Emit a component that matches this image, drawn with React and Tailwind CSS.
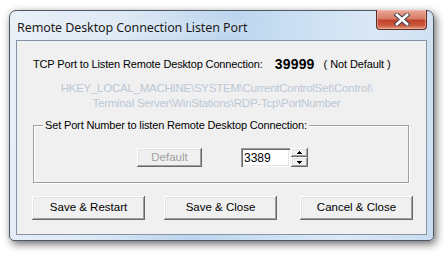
import React from "react";

const btn =
  "bg-[#f0f0f0] shadow-[inset_-1px_-1px_0_#696969,inset_1px_1px_0_#ffffff,inset_-2px_-2px_0_#a0a0a0,inset_2px_2px_0_#e3e3e3] flex items-center justify-center text-[11.5px] text-[#000]";

export default function App() {
  return (
    <div className="w-[445px] h-[257px] bg-white pl-[9px] pt-[10px] font-['Liberation_Sans',sans-serif]">
      <div className="relative w-[425px] h-[231px] rounded-t-[7px] rounded-b-[5px] border border-[#4d5865] shadow-[2px_3px_9px_rgba(0,0,0,0.6)] bg-[linear-gradient(100deg,#e9f0f8_0%,#dde9f5_25%,#bcd5ee_48%,#cadff3_62%,#dbe8f5_80%,#c9dcf0_100%)] flex flex-col">
        {/* title bar */}
        <div className="h-[29px] flex items-start pl-[7px] pr-[6px] shrink-0">
          <div className="mt-[9px] text-[12.5px] text-[#1a1a1a] font-['Noto_Sans',sans-serif] tracking-[-0.1px] leading-[16px] [text-shadow:0_0_8px_rgba(255,255,255,0.9)]">
            Remote Desktop Connection Listen Port
          </div>
          <div className="ml-auto w-[51px] h-[20px] -mt-px rounded-b-[4px] border border-t-0 border-[#5a2a24] bg-[linear-gradient(180deg,#e8a796_0%,#d87c66_45%,#c2432a_55%,#c9573c_80%,#e09a7c_100%)] shadow-[inset_0_0_0_1px_rgba(255,200,190,0.5)] flex items-center justify-center">
            <svg width="16" height="13" viewBox="0 0 16 13">
              <path d="M3 2 L13 11 M13 2 L3 11" stroke="#3a3a4a" strokeWidth="4.6" strokeLinecap="square" />
              <path d="M3 2 L13 11 M13 2 L3 11" stroke="#ffffff" strokeWidth="2.8" strokeLinecap="square" />
            </svg>
          </div>
        </div>
        {/* client */}
        <div className="mx-[6px] mb-[5px] flex-1 border border-[#8593a4] bg-[#f0f0f0] flex flex-col text-[11px] text-black">
          <div className="flex items-center h-[24px] mt-[11px] pl-[16px]">
            <span className="tracking-[-0.15px]">TCP Port to Listen Remote Desktop Connection:</span>
            <span className="ml-[12px] text-[14px] font-bold tracking-[0.2px]">39999</span>
            <span className="ml-[9px] tracking-[-0.1px]">( Not Default )</span>
          </div>
          <div className="mt-[5px] flex flex-col items-center text-[11.5px] leading-[15px] text-[#bcc8d4] pr-[10px] tracking-[-0.25px]">
            <div>HKEY_LOCAL_MACHINE\SYSTEM\CurrentControlSet\Control\</div>
            <div>Terminal Server\WinStations\RDP-Tcp\PortNumber</div>
          </div>
          <div className="relative mt-[14px] ml-[16px] w-[376px] h-[58px] border border-[#a0a0a0] shadow-[1px_1px_0_#ffffff,inset_1px_1px_0_#ffffff]">
            <div className="absolute left-[9px] -top-[8px] px-[2px] bg-[#f0f0f0] tracking-[-0.15px] leading-[14px]">
              Set Port Number to listen Remote Desktop Connection:
            </div>
            <div className="flex items-center mt-[22px] pl-[103px]">
              <div className={btn + " w-[65px] h-[19px] text-[#a0a0a0]"}>Default</div>
              <div className="ml-[39px] w-[49px] h-[19px] bg-white shadow-[inset_1px_1px_0_#a0a0a0,inset_2px_2px_0_#696969,inset_-1px_-1px_0_#ffffff,inset_-2px_-2px_0_#e3e3e3] flex items-center pl-[3px] text-[12px]">
                3389
              </div>
              <div className="ml-px flex flex-col">
                <div className={btn + " w-[17px] h-[9px]"}>
                  <svg width="5" height="3" viewBox="0 0 5 3"><path d="M2 0h1v1h1v1h1v1H0V2h1V1h1z" fill="#000" /></svg>
                </div>
                <div className={btn + " w-[17px] h-[10px]"}>
                  <svg width="5" height="3" viewBox="0 0 5 3"><path d="M0 0h5v1H4v1H3v1H2V2H1V1H0z" fill="#000" /></svg>
                </div>
              </div>
            </div>
          </div>
          <div className="flex mt-[13px] pl-[15px] gap-[19px]">
            <div className={btn + " w-[113px] h-[24px]"}>Save &amp; Restart</div>
            <div className={btn + " w-[113px] h-[24px]"}>Save &amp; Close</div>
            <div className={btn + " w-[113px] h-[24px] ml-[4px]"}>Cancel &amp; Close</div>
          </div>
        </div>
      </div>
    </div>
  );
}
